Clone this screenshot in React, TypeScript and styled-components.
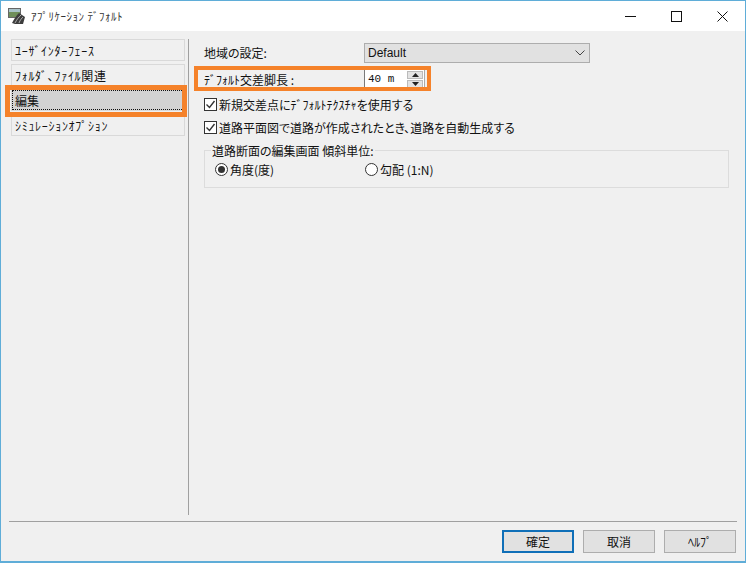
import React from 'react';
import styled, { createGlobalStyle } from 'styled-components';

const GlobalStyle = createGlobalStyle`
	html, body {
		margin: 0;
		padding: 0;
		background: #f0f0f0;
	}
	* {
		box-sizing: border-box;
	}
`;

const Window = styled.div`
	position: relative;
	display: flex;
	flex-direction: column;
	width: 746px;
	height: 563px;
	border: 1px solid #5fadd8;
	border-bottom-width: 2px;
	background: #f0f0f0;
	color: #111;
	font-family: 'Noto Sans CJK JP', 'Liberation Sans', sans-serif;
	font-size: 12px;
	font-feature-settings: 'palt';
	overflow: hidden;
`;

const TitleBar = styled.div`
	display: flex;
	align-items: center;
	height: 30px;
	flex: none;
	padding-left: 7px;
	background: #fff;
`;

const TitleText = styled.span`
	margin-left: 5px;
	font-size: 11px;
	letter-spacing: 0.5px;
	color: #333;
`;

const WindowButtons = styled.div`
	display: flex;
	margin-left: auto;
`;

const WindowButton = styled.div`
	display: flex;
	align-items: center;
	justify-content: center;
	width: 46px;
	height: 30px;
`;

const Main = styled.div`
	display: flex;
	flex: 1;
	min-height: 0;
	padding: 8px 0 0 10px;
`;

const Sidebar = styled.div`
	display: flex;
	flex-direction: column;
	gap: 3px;
	width: 174px;
	flex: none;
`;

const NavItem = styled.div<{ $active?: boolean }>`
	display: flex;
	align-items: center;
	height: 22px;
	padding-left: 3px;
	border: 1px solid #d9d9d9;
	background: ${(p) => (p.$active ? '#d3d3d3' : '#f0f0f0')};
	outline: ${(p) => (p.$active ? '1px dotted #111' : 'none')};
	outline-offset: -2px;
	font-size: 12px;
	letter-spacing: ${(p) => (p.$active ? 0 : 0.7)}px;
`;

const Divider = styled.div`
	width: 1px;
	height: 476px;
	margin-left: 3px;
	flex: none;
	background: #a0a0a0;
`;

const Content = styled.div`
	display: flex;
	flex-direction: column;
	flex: 1;
	padding: 1px 0 0 15px;
`;

const FormRow = styled.div<{ $h: number }>`
	display: flex;
	align-items: center;
	height: ${(p) => p.$h}px;
`;

const FieldLabel = styled.label`
	width: 160px;
	flex: none;
`;

const SelectBox = styled.div`
	display: flex;
	align-items: center;
	justify-content: space-between;
	width: 226px;
	height: 20px;
	padding: 0 4px 0 3px;
	border: 1px solid #adadad;
	background: #e1e1e1;
	font-family: 'Liberation Sans', sans-serif;
`;

const Spinner = styled.div`
	display: flex;
	align-items: center;
	justify-content: space-between;
	width: 61px;
	height: 21px;
	padding: 0 1px 0 3px;
	border-left: 1px solid #7a7a7a;
	border-right: 1px solid #aaa;
	background: #fff;
	font-family: 'Liberation Mono', monospace;
	font-size: 11px;
`;

const SpinButtons = styled.div`
	display: flex;
	flex-direction: column;
	gap: 1px;
	width: 16px;
	margin-top: 1px;
`;

const SpinButton = styled.div`
	display: flex;
	align-items: center;
	justify-content: center;
	height: 8px;
	background: #e3e3e3;
	border: 1px solid #bbb;
`;

const CheckRow = styled.div`
	display: flex;
	align-items: center;
	gap: 2px;
	height: 23px;
	font-size: 12px;
`;

const CheckBox = styled.div`
	display: flex;
	align-items: center;
	justify-content: center;
	width: 13px;
	height: 13px;
	border: 1px solid #333;
	background: #fff;
`;

const GroupBox = styled.fieldset`
	display: flex;
	width: 525px;
	height: 44px;
	margin: 5px 0 0;
	padding: 0 0 0 10px;
	border: 1px solid #dcdcdc;
	min-width: 0;
`;

const GroupLegend = styled.legend`
	margin-left: -4px;
	padding: 0 1px;
	font-size: 12px;
	line-height: 13px;
`;

const RadioOption = styled.div`
	display: flex;
	align-items: center;
	gap: 2px;
	width: 150px;
	height: 24px;
	font-size: 12px;
`;

const RadioDot = styled.div<{ $on?: boolean }>`
	display: flex;
	align-items: center;
	justify-content: center;
	width: 13px;
	height: 13px;
	border: 1px solid #333;
	border-radius: 50%;
	background: #fff;
	&::after {
		content: '';
		display: ${(p) => (p.$on ? 'block' : 'none')};
		width: 7px;
		height: 7px;
		border-radius: 50%;
		background: #333;
	}
`;

const Footer = styled.div`
	flex: none;
	margin: 0 8px;
	height: 40px;
	padding: 8px 1px 0 0;
	border-top: 1px solid #a0a0a0;
	display: flex;
	justify-content: flex-end;
	gap: 9px;
`;

const DialogButton = styled.div<{ $primary?: boolean }>`
	display: flex;
	align-items: center;
	justify-content: center;
	width: 72px;
	height: 23px;
	background: #e1e1e1;
	border: ${(p) => (p.$primary ? '2px solid #0f6fb8' : '1px solid #adadad')};
	font-size: 12px;
`;

const Highlight = styled.div<{ $x: number; $y: number; $w: number; $h: number; $t: number }>`
	position: absolute;
	left: ${(p) => p.$x}px;
	top: ${(p) => p.$y}px;
	width: ${(p) => p.$w}px;
	height: ${(p) => p.$h}px;
	border: ${(p) => p.$t}px solid #f5822a;
	pointer-events: none;
`;

const AppIcon = () => (
	<svg width="18" height="18" viewBox="0 0 18 18">
		<rect x="0.5" y="1.5" width="12" height="9" fill="#6f8f5a" stroke="#666" />
		<rect x="1" y="2" width="11" height="3" fill="#a9c3c9" />
		<path d="M4 16 C6 12 8 9 11 6 L17 10 L15 17 L7 17 Z" fill="#3d3d3d" />
		<path d="M7 16 C9 12 11 10 13 8 M11 16 C12 13 14 11 15 10" fill="none" stroke="#c8c8c8" strokeWidth="0.8" />
	</svg>
);

const Check = () => (
	<svg width="11" height="11" viewBox="0 0 11 11">
		<path d="M1.5 5.5 L4.5 8.5 L9.5 2" fill="none" stroke="#333" strokeWidth="1.4" />
	</svg>
);

const navItems = ['ﾕｰｻﾞｲﾝﾀｰﾌｪｰｽ', 'ﾌｫﾙﾀﾞ､ﾌｧｲﾙ関連', '編集', 'ｼﾐｭﾚｰｼｮﾝｵﾌﾟｼｮﾝ'];

export default function App() {
	return (
		<>
			<GlobalStyle />
			<Window>
				<TitleBar>
					<AppIcon />
					<TitleText>ｱﾌﾟﾘｹｰｼｮﾝ ﾃﾞﾌｫﾙﾄ</TitleText>
					<WindowButtons>
						<WindowButton>
							<svg width="11" height="11" viewBox="0 0 11 11">
								<path d="M0 5.5 H11" stroke="#111" />
							</svg>
						</WindowButton>
						<WindowButton>
							<svg width="11" height="11" viewBox="0 0 11 11">
								<rect x="0.5" y="0.5" width="10" height="10" fill="none" stroke="#111" />
							</svg>
						</WindowButton>
						<WindowButton>
							<svg width="11" height="11" viewBox="0 0 11 11">
								<path d="M0.5 0.5 L10.5 10.5 M10.5 0.5 L0.5 10.5" stroke="#111" />
							</svg>
						</WindowButton>
					</WindowButtons>
				</TitleBar>
				<Main>
					<Sidebar>
						{navItems.map((item, i) => (
							<NavItem key={item} $active={i === 2}>
								{item}
							</NavItem>
						))}
					</Sidebar>
					<Divider />
					<Content>
						<FormRow $h={25}>
							<FieldLabel>地域の設定:</FieldLabel>
							<SelectBox>
								Default
								<svg width="10" height="6" viewBox="0 0 10 6">
									<path d="M0.5 0.5 L5 5 L9.5 0.5" fill="none" stroke="#444" />
								</svg>
							</SelectBox>
						</FormRow>
						<FormRow $h={28}>
							<FieldLabel>ﾃﾞﾌｫﾙﾄ交差脚長 :</FieldLabel>
							<Spinner>
								40 m
								<SpinButtons>
									<SpinButton>
										<svg width="7" height="4" viewBox="0 0 7 4">
											<path d="M0 4 L3.5 0 L7 4 Z" fill="#222" />
										</svg>
									</SpinButton>
									<SpinButton>
										<svg width="7" height="4" viewBox="0 0 7 4">
											<path d="M0 0 L3.5 4 L7 0 Z" fill="#222" />
										</svg>
									</SpinButton>
								</SpinButtons>
							</Spinner>
						</FormRow>
						<CheckRow>
							<CheckBox>
								<Check />
							</CheckBox>
							新規交差点にﾃﾞﾌｫﾙﾄﾃｸｽﾁｬを使用する
						</CheckRow>
						<CheckRow>
							<CheckBox>
								<Check />
							</CheckBox>
							道路平面図で道路が作成されたとき、道路を自動生成する
						</CheckRow>
						<GroupBox>
							<GroupLegend>道路断面の編集画面 傾斜単位:</GroupLegend>
							<RadioOption>
								<RadioDot $on />
								角度(度)
							</RadioOption>
							<RadioOption>
								<RadioDot />
								勾配 (1:N)
							</RadioOption>
						</GroupBox>
					</Content>
				</Main>
				<Footer>
					<DialogButton $primary>確定</DialogButton>
					<DialogButton>取消</DialogButton>
					<DialogButton>ﾍﾙﾌﾟ</DialogButton>
				</Footer>
				<Highlight $x={4} $y={84} $w={182} $h={32} $t={5} />
				<Highlight $x={193} $y={65} $w={237} $h={25} $t={4} />
			</Window>
		</>
	);
}
